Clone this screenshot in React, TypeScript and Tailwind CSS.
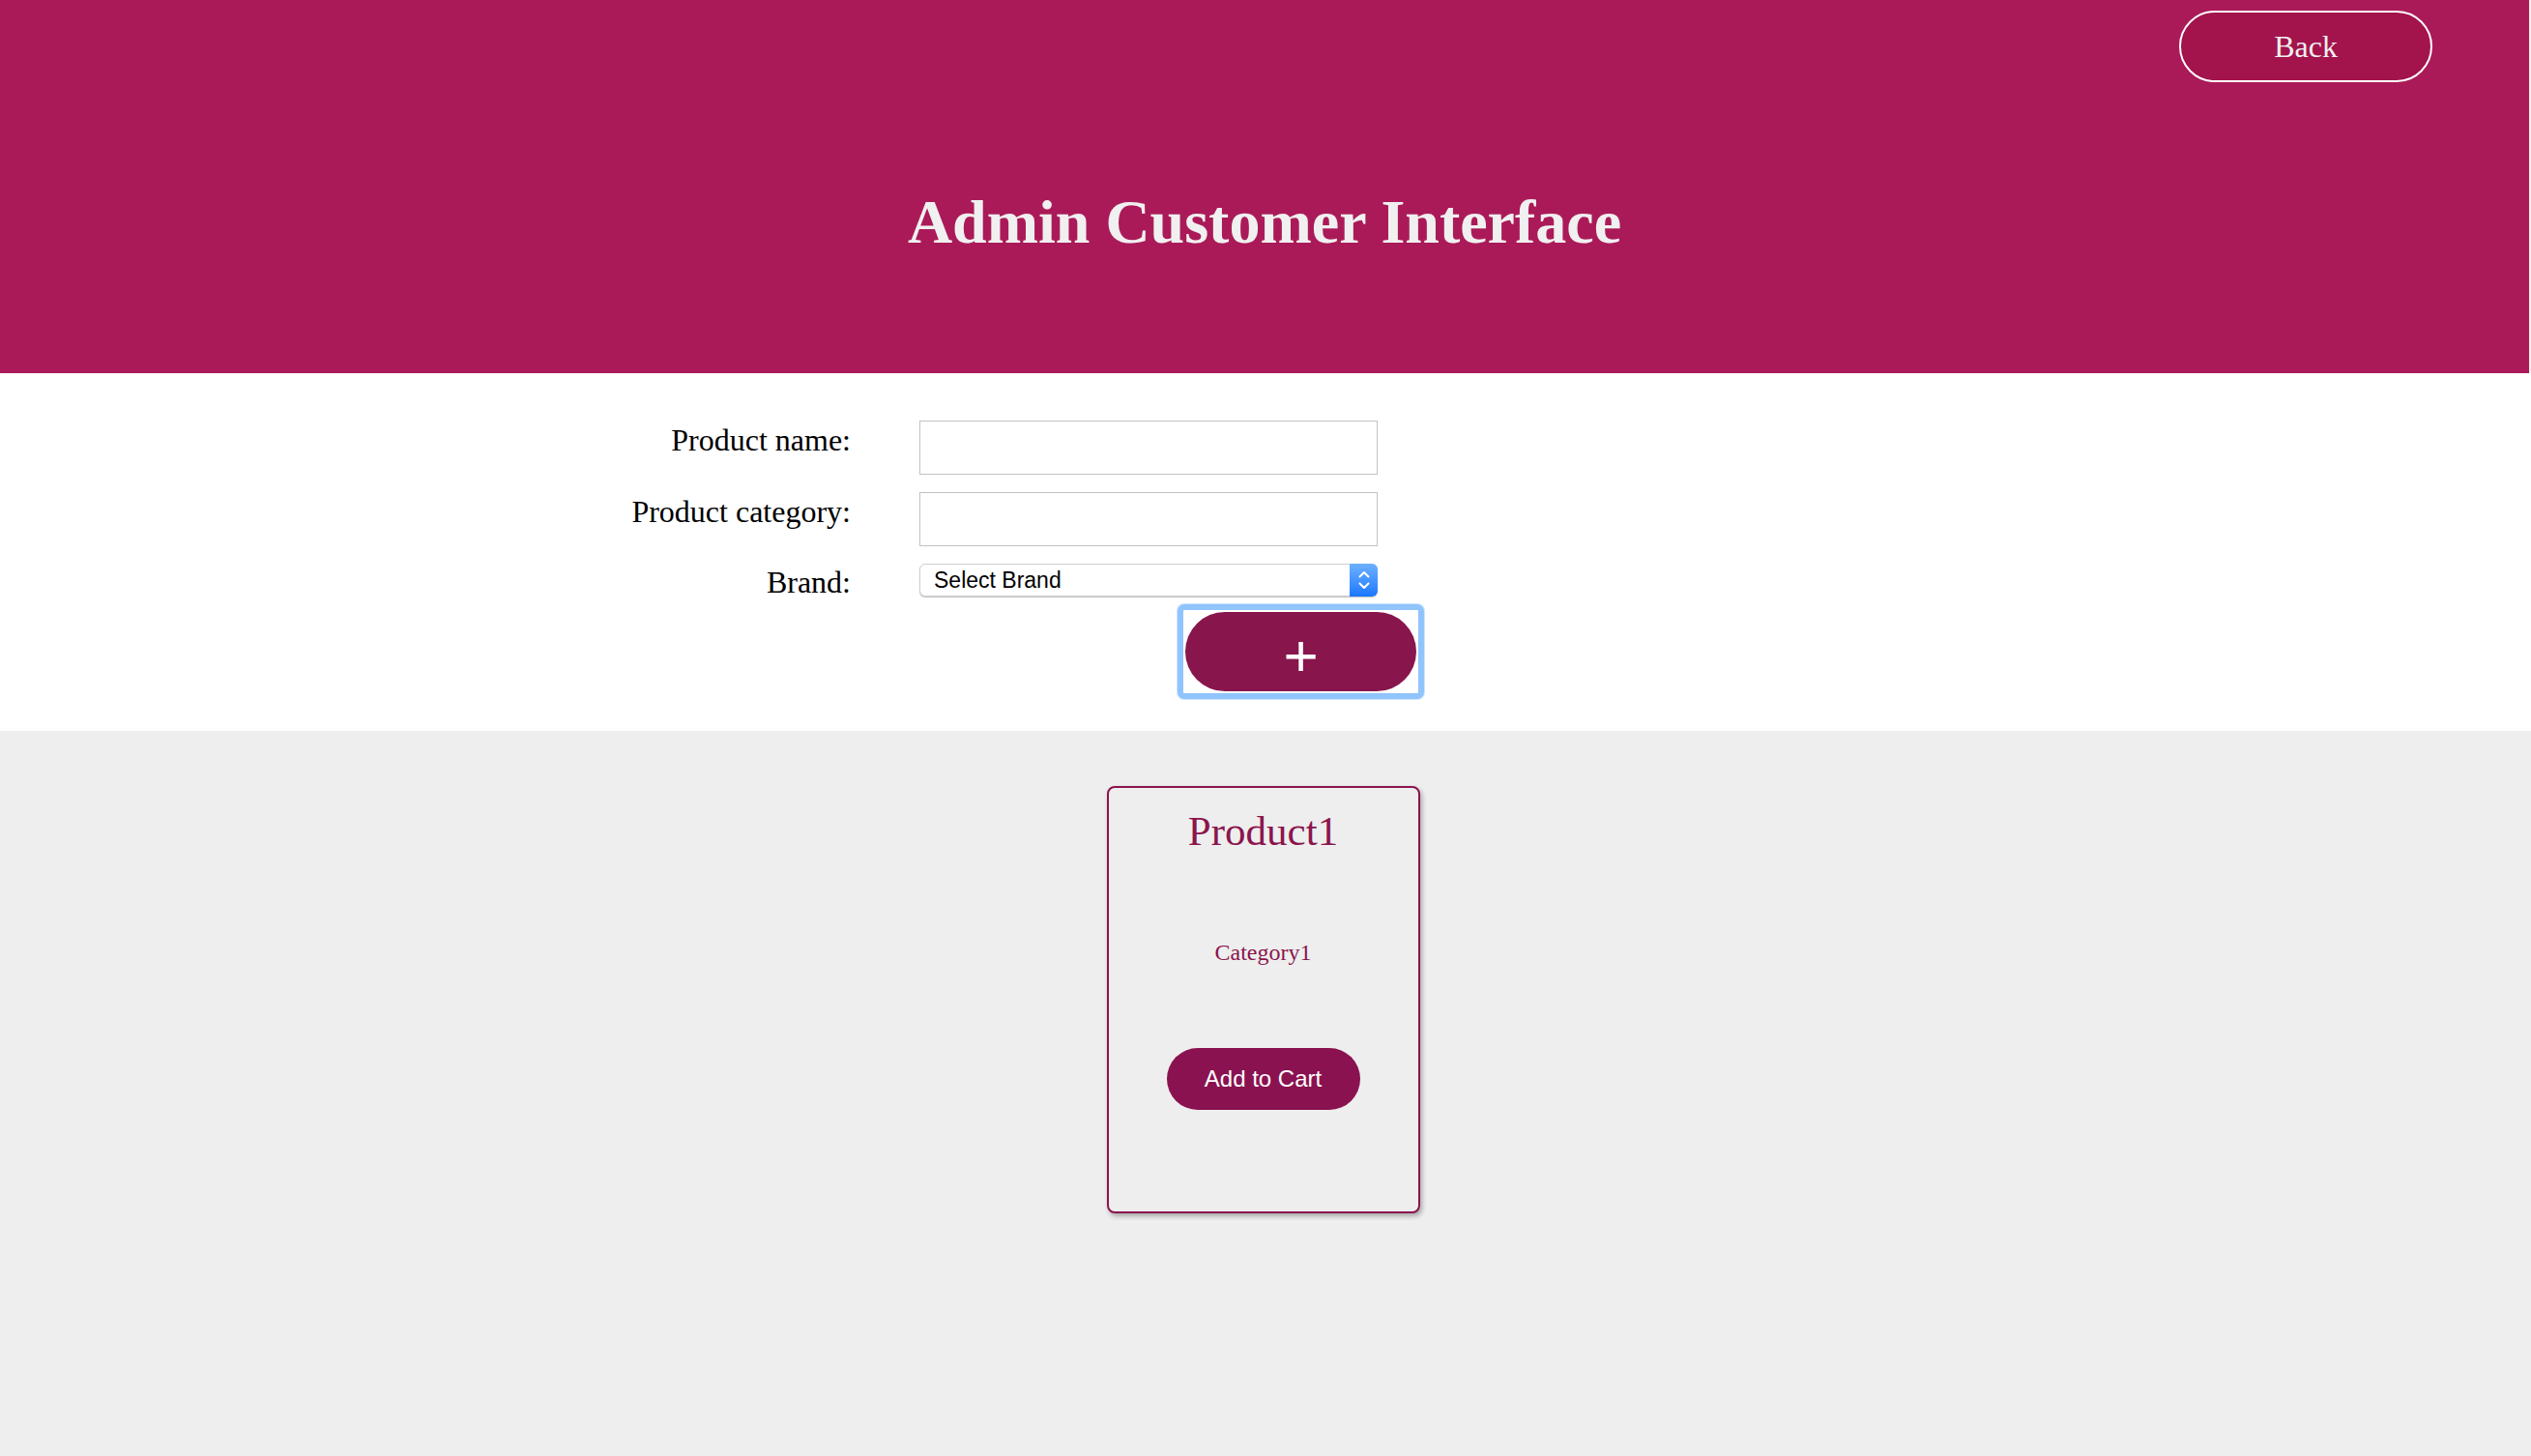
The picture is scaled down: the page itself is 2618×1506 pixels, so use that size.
import React from "react";

const serif = { fontFamily: '"Liberation Serif", "Times New Roman", serif' };
const sans = { fontFamily: '"Liberation Sans", Arial, sans-serif' };

export default function App() {
  return (
    <div className="min-h-[1506px] w-full bg-[#eeeeee]" style={serif}>
      {/* Header */}
      <header className="mr-[2px] flex h-[386px] flex-col bg-[#ab1a58]">
        <div className="flex justify-end pr-[100px] pt-[11px]">
          <button
            className="flex h-[74px] w-[262px] items-center justify-center rounded-full border-2 border-white bg-[#a3134c] text-[32px] leading-none text-[#efefef]"
            style={serif}
          >
            Back
          </button>
        </div>
        <h1 className="mt-[113px] text-center text-[64px] font-bold leading-[64px] text-[#f0f0f0]">
          Admin Customer Interface
        </h1>
      </header>

      {/* Form */}
      <section className="bg-white pb-[33px] pl-[580px] pt-[49px]">
        <div className="grid grid-cols-[300px_474px] gap-x-[71px] gap-y-[18px]">
          <label className="pt-[2px] text-right text-[32px] leading-[37px] text-black">
            Product name:
          </label>
          <input
            type="text"
            className="h-[56px] w-[474px] border border-[#c2c2c2] bg-white outline-none"
          />

          <label className="pt-[2px] text-right text-[32px] leading-[37px] text-black">
            Product category:
          </label>
          <input
            type="text"
            className="h-[56px] w-[474px] border border-[#c2c2c2] bg-white outline-none"
          />

          <label className="h-[34px] pt-[1px] text-right text-[32px] leading-[37px] text-black">
            Brand:
          </label>
          <div className="relative h-[34px] w-[474px]">
            <select
              className="h-[34px] w-[474px] appearance-none rounded-[6px] border border-[#cfcfcf] bg-white pl-[14px] text-[23px] leading-none text-black shadow-[0_1px_1px_rgba(0,0,0,0.25)] outline-none"
              style={sans}
              defaultValue=""
            >
              <option value="">Select Brand</option>
            </select>
            <div className="pointer-events-none absolute bottom-0 right-0 top-0 flex w-[29px] flex-col items-center justify-center gap-[4px] rounded-r-[6px] bg-gradient-to-b from-[#6cb0ff] to-[#1877ff]">
              <svg width="12" height="8" viewBox="0 0 12 8" fill="none">
                <path d="M1.5 6.5 L6 2 L10.5 6.5" stroke="white" strokeWidth="2" strokeLinecap="round" strokeLinejoin="round" />
              </svg>
              <svg width="12" height="8" viewBox="0 0 12 8" fill="none">
                <path d="M1.5 1.5 L6 6 L10.5 1.5" stroke="white" strokeWidth="2" strokeLinecap="round" strokeLinejoin="round" />
              </svg>
            </div>
          </div>

          <div />
          <div className="-mt-[10px] ml-[267px] w-[255px] rounded-[7px] border-[6px] border-[#90c4fc] bg-white p-[2px] shadow-[0_0_0_1px_#cfe5fe]">
            <button
              className="flex h-[82px] w-[239px] items-center justify-center rounded-full bg-[#89154d] pt-[8px] text-[62px] leading-none text-white"
              style={sans}
            >
              +
            </button>
          </div>
        </div>
      </section>

      {/* Products */}
      <section className="flex justify-center pr-[5px] pt-[57px]">
        <div className="flex h-[442px] w-[324px] flex-col items-center rounded-[8px] border-2 border-[#8a154d] bg-[#eeeeee] pt-[23px] shadow-[2px_3px_5px_rgba(0,0,0,0.3)]">
          <h2 className="text-[43px] leading-[43px] text-[#8a154d]">Product1</h2>
          <p className="mt-[92px] text-[24px] leading-[24px] text-[#8a154d]">Category1</p>
          <button
            className="mt-[87px] flex h-[64px] w-[200px] items-center justify-center rounded-full bg-[#8a1250] text-[24px] leading-none text-white"
            style={sans}
          >
            Add to Cart
          </button>
        </div>
      </section>
    </div>
  );
}
